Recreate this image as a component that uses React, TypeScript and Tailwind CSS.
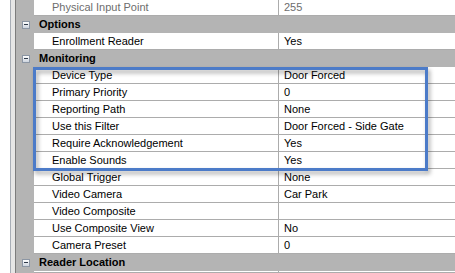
type Row =
  | { kind: 'cat'; label: string }
  | { kind: 'prop'; name: string; value: string; muted?: boolean }

const rows: Row[] = [
  { kind: 'prop', name: 'Physical Input Point', value: '255', muted: true },
  { kind: 'cat', label: 'Options' },
  { kind: 'prop', name: 'Enrollment Reader', value: 'Yes' },
  { kind: 'cat', label: 'Monitoring' },
  { kind: 'prop', name: 'Device Type', value: 'Door Forced' },
  { kind: 'prop', name: 'Primary Priority', value: '0' },
  { kind: 'prop', name: 'Reporting Path', value: 'None' },
  { kind: 'prop', name: 'Use this Filter', value: 'Door Forced - Side Gate' },
  { kind: 'prop', name: 'Require Acknowledgement', value: 'Yes' },
  { kind: 'prop', name: 'Enable Sounds', value: 'Yes' },
  { kind: 'prop', name: 'Global Trigger', value: 'None' },
  { kind: 'prop', name: 'Video Camera', value: 'Car Park' },
  { kind: 'prop', name: 'Video Composite', value: '' },
  { kind: 'prop', name: 'Use Composite View', value: 'No' },
  { kind: 'prop', name: 'Camera Preset', value: '0' },
  { kind: 'cat', label: 'Reader Location' },
  { kind: 'prop', name: '', value: '' },
]

function MinusBox() {
  return (
    <span className="flex h-[8px] w-[8px] items-center justify-center border border-[#8c96a4] bg-gradient-to-b from-white to-[#cdd4de]">
      <span className="h-px w-[4px] bg-[#2f3a4a]" />
    </span>
  )
}

function CategoryRow({ label }: { label: string }) {
  return (
    <div className="flex h-[17px] items-center bg-[#b4b4b4]">
      <div className="flex w-[18px] shrink-0 items-center pl-[6px]">
        <MinusBox />
      </div>
      <span className="pl-[5px] font-bold leading-[17px] text-black">{label}</span>
    </div>
  )
}

function PropRow({ name, value, muted }: { name: string; value: string; muted?: boolean }) {
  const color = muted ? 'text-[#6d6d6d]' : 'text-black'
  return (
    <div className="flex h-[17px]">
      <div className="w-[18px] shrink-0 bg-[#b4b4b4]" />
      <div className={`w-[245px] shrink-0 border-b border-r border-[#acacac] bg-white pl-[18px] leading-[16px] ${color}`}>
        {name}
      </div>
      <div className={`flex-1 border-b border-[#acacac] bg-white pl-[5px] leading-[16px] ${color}`}>{value}</div>
    </div>
  )
}

export default function App() {
  return (
    <div className="relative flex h-[273px] w-[455px] overflow-hidden bg-white font-['Liberation_Sans',Arial,sans-serif] text-[11px]">
      <div className="flex shrink-0">
        <div className="w-[10px] bg-white" />
        <div className="w-px bg-[#a7adb6]" />
        <div className="w-[4px] bg-[#e6e6e6]" />
        <div className="w-px bg-[#7c7c7c]" />
      </div>
      <div className="-mt-px flex flex-1 flex-col">
        {rows.map((r, i) =>
          r.kind === 'cat' ? (
            <CategoryRow key={i} label={r.label} />
          ) : (
            <PropRow key={i} name={r.name} value={r.value} muted={r.muted} />
          ),
        )}
      </div>
      <div className="pointer-events-none absolute left-[33px] top-[67px] h-[104px] w-[395px] border-[3px] border-[#4c7bc8] [filter:drop-shadow(2px_3px_2px_rgba(0,0,0,0.35))]" />
    </div>
  )
}
